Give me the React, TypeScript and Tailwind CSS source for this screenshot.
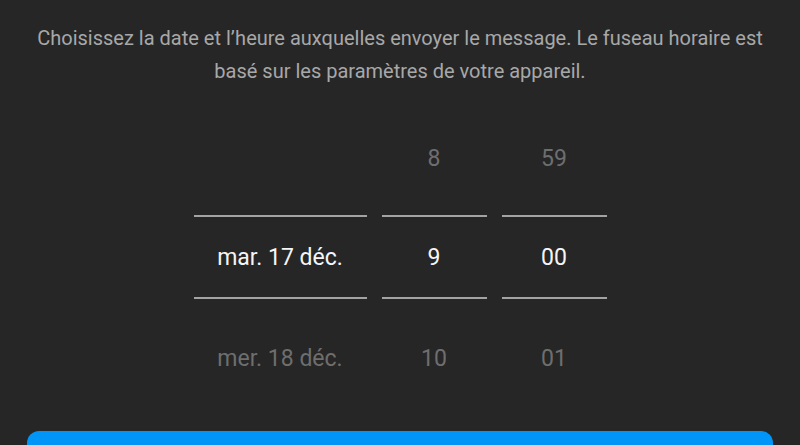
import React from "react";

// Sélecteur date/heure pour la programmation d'un message
type Column = {
  width: string;
  prev: string;
  current: string;
  next: string;
};

const columns: Column[] = [
  { width: "w-[173px]", prev: "", current: "mar. 17 déc.", next: "mer. 18 déc." },
  { width: "w-[105px]", prev: "8", current: "9", next: "10" },
  { width: "w-[105px]", prev: "59", current: "00", next: "01" },
];

function PickerColumn({ col }: { col: Column }) {
  return (
    <div className={`${col.width} flex flex-col items-stretch`}>
      <div className="h-[84px] pt-[2px] flex items-center justify-center text-[23px] text-[#6e6e6e]">
        {col.prev}
      </div>
      <div className="mt-[15px] h-[2px] bg-[#a3a3a3]" />
      <div className="h-[80px] pt-[2px] flex items-center justify-center text-[23px] text-[#f5f5f5]">
        {col.current}
      </div>
      <div className="h-[2px] bg-[#a3a3a3]" />
      <div className="mt-[16px] h-[84px] pt-[4px] flex items-center justify-center text-[23px] text-[#6e6e6e]">
        {col.next}
      </div>
    </div>
  );
}

export default function App() {
  return (
    <div className="w-[800px] h-[445px] overflow-hidden bg-[#262626] font-['Roboto',sans-serif] flex flex-col">
      <p className="pt-[22px] px-4 text-center text-[20px] leading-[33px] text-[#a8a8a8]">
        Choisissez la date et l’heure auxquelles envoyer le message. Le fuseau horaire est
        <br />
        basé sur les paramètres de votre appareil.
      </p>

      <div className="mt-[28px] flex justify-center gap-[15px]">
        {columns.map((col, i) => (
          <PickerColumn key={i} col={col} />
        ))}
      </div>

      <div className="mt-[7px] h-px bg-[#383838]" />

      {/* bouton de validation, coupé en bas de l'écran */}
      <div className="mt-[25px] px-[27px]">
        <div className="w-full h-[48px] rounded-[12px] bg-[#0095f6]" />
      </div>
    </div>
  );
}
